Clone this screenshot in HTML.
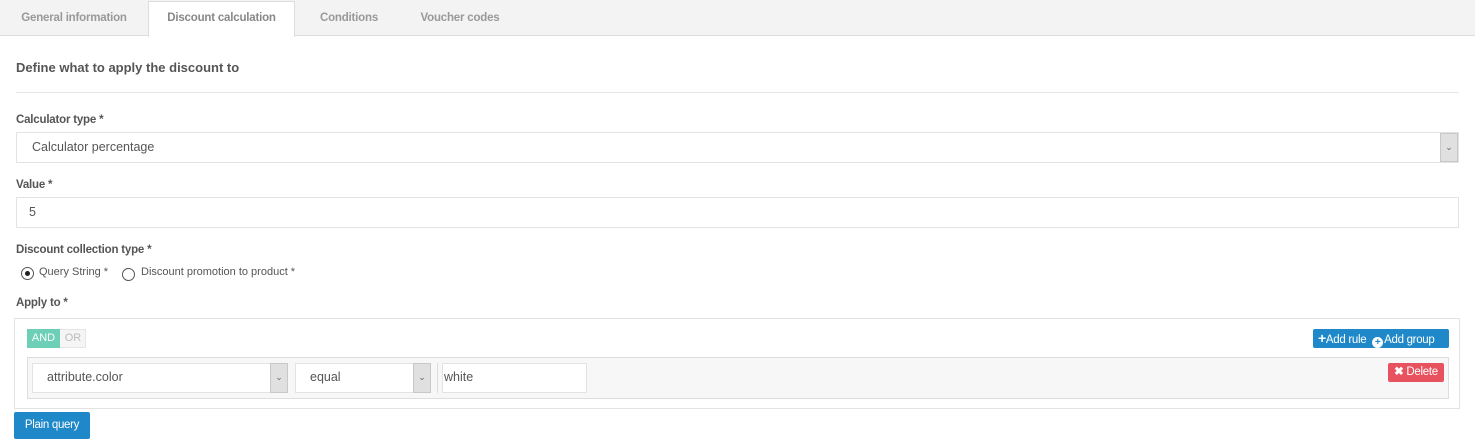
<!DOCTYPE html>
<html><head><meta charset="utf-8"><style>
*{box-sizing:border-box;margin:0;padding:0}
body{width:1475px;height:446px;background:#fff;font-family:"Liberation Sans",sans-serif;color:#555;position:relative;overflow:hidden}
.a{position:absolute}
.tab{position:absolute;top:0;height:36px;line-height:36px;font-size:11.5px;font-weight:bold;color:#999;text-align:center;letter-spacing:-0.2px}
.lbl{position:absolute;left:16px;font-size:11.5px;font-weight:bold;color:#555;letter-spacing:-0.2px}
.box{position:absolute;border:1px solid #e3e3e3;background:#fff}
.arr{position:absolute;background:#e0e0e0;border:1px solid #c8c8c8;font-size:9px;color:#666;text-align:center}
.btn{position:absolute;color:#fff;font-size:11.5px;border-radius:2px;letter-spacing:-0.3px}
.ic{display:inline-block;width:11px;height:11px;border-radius:50%;background:#fff;color:#1e88c9;font-size:10px;line-height:11px;text-align:center;font-weight:bold;vertical-align:-2px;margin-right:1px}
</style></head><body>
<div class="a" style="left:0;top:0;width:1475px;height:36px;background:#f3f3f3;border-bottom:1px solid #ddd"></div>
<div class="tab" style="left:0;width:148px">General information</div>
<div class="a" style="left:148px;top:1px;width:147px;height:36px;background:#fff;border:1px solid #ddd;border-bottom:none"></div>
<div class="tab" style="left:148px;width:147px;color:#888">Discount calculation</div>
<div class="tab" style="left:296px;width:106px">Conditions</div>
<div class="tab" style="left:402px;width:116px">Voucher codes</div>

<div class="a" style="left:16px;top:60px;font-size:13px;font-weight:bold;color:#555">Define what to apply the discount to</div>
<div class="a" style="left:16px;top:92px;width:1443px;height:1px;background:#e5e5e5"></div>

<div class="lbl" style="top:114px">Calculator type *</div>
<div class="box" style="left:16px;top:132px;width:1443px;height:31px"></div>
<div class="a" style="left:32px;top:140px;font-size:12.5px;color:#555">Calculator percentage</div>
<div class="arr" style="left:1440px;top:133px;width:18px;height:29px;line-height:27px">&#8964;</div>

<div class="lbl" style="top:179px">Value *</div>
<div class="box" style="left:16px;top:197px;width:1443px;height:31px"></div>
<div class="a" style="left:29px;top:205px;font-size:12.5px;color:#555">5</div>

<div class="lbl" style="top:244px">Discount collection type *</div>
<div class="a" style="left:21px;top:267px;width:13px;height:13px;border:1px solid #555;border-radius:50%"></div>
<div class="a" style="left:25px;top:271px;width:5px;height:5px;background:#222;border-radius:50%"></div>
<div class="a" style="left:39px;top:266px;font-size:11px;color:#555">Query String *</div>
<div class="a" style="left:122px;top:268px;width:13px;height:13px;border:1px solid #555;border-radius:50%"></div>
<div class="a" style="left:141px;top:266px;font-size:11px;color:#555">Discount promotion to product *</div>

<div class="lbl" style="top:297px">Apply to *</div>
<div class="box" style="left:14px;top:318px;width:1446px;height:91px"></div>
<div class="a" style="left:27px;top:329px;width:59px;height:19px;border:1px solid #e5e5e5;background:#f5f5f5"></div>
<div class="a" style="left:27px;top:329px;width:33px;height:19px;background:#6dcfb5;color:#fff;font-size:11px;line-height:19px;text-align:center">AND</div>
<div class="a" style="left:60px;top:329px;width:26px;height:19px;color:#bbb;font-size:11px;line-height:19px;text-align:center">OR</div>
<div class="btn" style="left:1313px;top:329px;width:136px;height:19px;background:#1e88c9;line-height:19px;padding-left:5px;white-space:nowrap">
<span style="font-weight:bold;font-size:14px">+</span>Add rule&nbsp;&nbsp;<span class="ic">+</span>Add group</div>

<div class="a" style="left:27px;top:357px;width:1422px;height:42px;background:#f7f7f7;border:1px solid #ddd"></div>
<div class="box" style="left:32px;top:363px;width:256px;height:30px"></div>
<div class="a" style="left:47px;top:370px;font-size:12.5px;color:#555">attribute.color</div>
<div class="arr" style="left:270px;top:363px;width:18px;height:30px;line-height:27px">&#8964;</div>
<div class="box" style="left:295px;top:363px;width:136px;height:30px"></div>
<div class="a" style="left:310px;top:370px;font-size:12.5px;color:#555">equal</div>
<div class="arr" style="left:413px;top:363px;width:18px;height:30px;line-height:27px">&#8964;</div>
<div class="a" style="left:437px;top:363px;width:1px;height:30px;background:#ddd"></div>
<div class="box" style="left:442px;top:363px;width:145px;height:30px"></div>
<div class="a" style="left:444px;top:370px;font-size:12.5px;color:#555">white</div>
<div class="btn" style="left:1388px;top:363px;width:56px;height:19px;background:#e8525f;line-height:19px;text-align:center"><b>&#10006;</b> Delete</div>

<div class="btn" style="left:14px;top:412px;width:76px;height:27px;background:#1e88c9;line-height:27px;text-align:center">Plain query</div>
</body></html>
